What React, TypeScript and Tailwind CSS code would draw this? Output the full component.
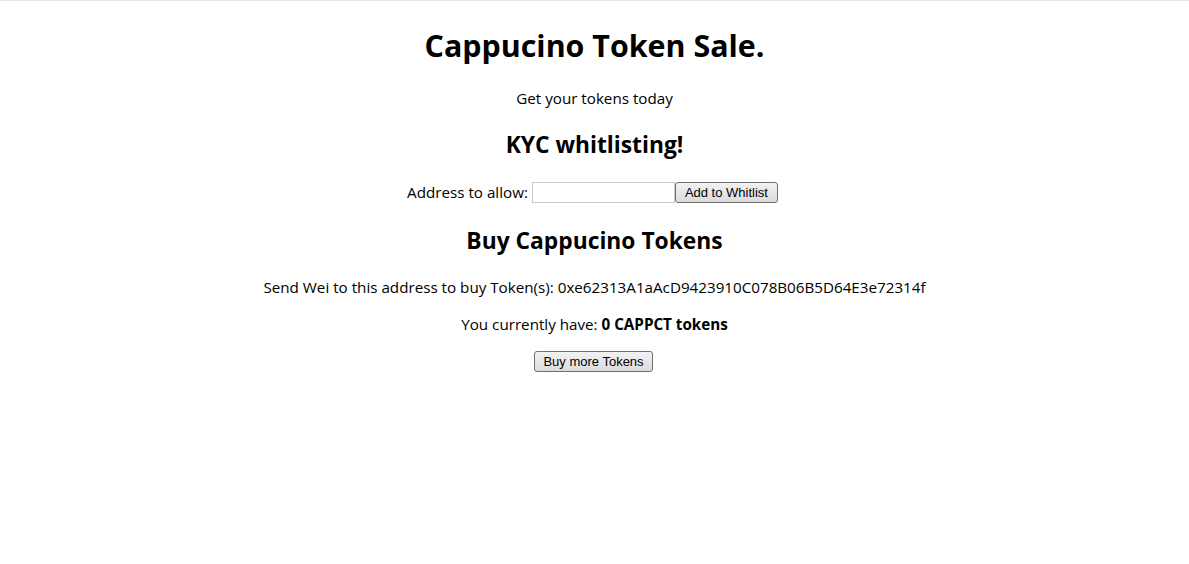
import React, { useState } from 'react';

export default function App() {
    const [address, setAddress] = useState('');
    const tokens = 0;

    const btn =
        "h-[21px] px-[8px] border border-[#707070] rounded-[3px] bg-gradient-to-b from-[#f2f2f2] to-[#dcdcdc] text-[13px] leading-none text-black font-['Liberation_Sans',Arial,sans-serif]";

    return (
        <div className="min-h-screen bg-white border-t border-[#e3e3e3] text-black font-['Open_Sans','Noto_Sans',sans-serif] text-center">
            <h1 className="mt-[25px] text-[30.4px] leading-[40px] font-bold">Cappucino Token Sale.</h1>
            <p className="mt-[22px] text-[15.2px] leading-[20px]">Get your tokens today</p>

            <h2 className="mt-[22px] text-[22.8px] leading-[30px] font-bold">KYC whitlisting!</h2>
            <div className="mt-[21px] h-[22px] pr-[4px] flex items-center justify-center text-[15.2px]">
                <span className="mr-[4px]">Address to allow:</span>
                <input
                    type="text"
                    value={address}
                    onChange={(e) => setAddress(e.target.value)}
                    className="w-[143px] h-[21px] border border-[#c8c8cc] bg-white px-1 text-[13px] outline-none"
                />
                <button className={btn + " w-[103px]"}>Add to Whitlist</button>
            </div>

            <h2 className="mt-[23px] text-[22.8px] leading-[30px] font-bold">Buy Cappucino Tokens</h2>
            <p className="mt-[21px] text-[15.2px] leading-[20px]">
                Send Wei to this address to buy Token(s): 0xe62313A1aAcD9423910C078B06B5D64E3e72314f
            </p>
            <p className="mt-[17px] text-[15.2px] leading-[20px]">
                You currently have: <strong>{tokens} CAPPCT tokens</strong>
            </p>
            <div className="mt-[17px] pr-[2px] flex justify-center">
                <button className={btn + " w-[119px]"}>Buy more Tokens</button>
            </div>
        </div>
    );
}
